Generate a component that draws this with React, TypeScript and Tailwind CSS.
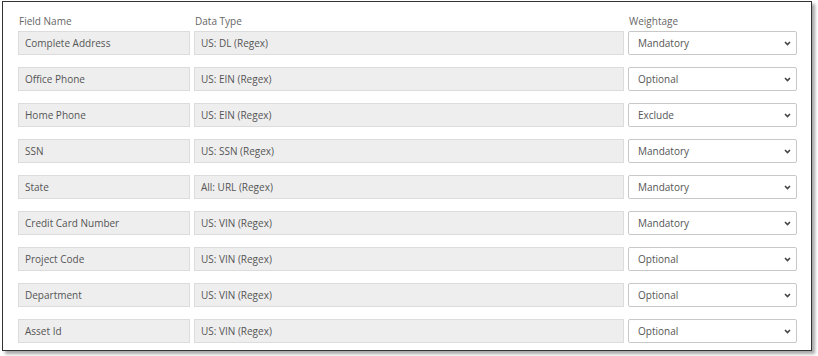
const rows = [
  { field: 'Complete Address', type: 'US: DL (Regex)', weight: 'Mandatory' },
  { field: 'Office Phone', type: 'US: EIN (Regex)', weight: 'Optional' },
  { field: 'Home Phone', type: 'US: EIN (Regex)', weight: 'Exclude' },
  { field: 'SSN', type: 'US: SSN (Regex)', weight: 'Mandatory' },
  { field: 'State', type: 'All: URL (Regex)', weight: 'Mandatory' },
  { field: 'Credit Card Number', type: 'US: VIN (Regex)', weight: 'Mandatory' },
  { field: 'Project Code', type: 'US: VIN (Regex)', weight: 'Optional' },
  { field: 'Department', type: 'US: VIN (Regex)', weight: 'Optional' },
  { field: 'Asset Id', type: 'US: VIN (Regex)', weight: 'Optional' },
]

function Chevron() {
  return (
    <svg width="7" height="5" viewBox="0 0 7 5" className="text-[#444]">
      <path d="M1 1 L3.5 3.5 L6 1" fill="none" stroke="currentColor" strokeWidth="1.6" />
    </svg>
  )
}

export default function App() {
  return (
    <div className="w-[818px] h-[356px] bg-white pt-px pl-[2px] font-['Open_Sans',sans-serif] text-[10px] text-[#555]">
      <div className="w-[810px] h-[350px] border border-[#333] bg-white shadow-[3px_3px_3px_rgba(0,0,0,0.35)] pl-[15px] pt-[9px]">
        {/* Header */}
        <div className="grid grid-cols-[172px_430px_169px] gap-x-[4px] h-[20px] items-center text-[#666]">
          <div className="pl-px">Field Name</div>
          <div className="pl-px">Data Type</div>
          <div className="pl-px">Weightage</div>
        </div>

        {/* Rows */}
        <div className="flex flex-col gap-[12px]">
          {rows.map((r, i) => (
            <div key={i} className="grid grid-cols-[172px_430px_169px] gap-x-[4px] h-[24px]">
              <div className="flex items-center bg-[#eeeeee] border border-[#dcdcdc] pl-[6px]">{r.field}</div>
              <div className="flex items-center bg-[#eeeeee] border border-[#dcdcdc] pl-[6px]">{r.type}</div>
              <div className="flex items-center justify-between bg-white border border-[#c8c8c8] rounded-[2px] pl-[9px] pr-[5px]">
                <span>{r.weight}</span>
                <Chevron />
              </div>
            </div>
          ))}
        </div>
      </div>
    </div>
  )
}
